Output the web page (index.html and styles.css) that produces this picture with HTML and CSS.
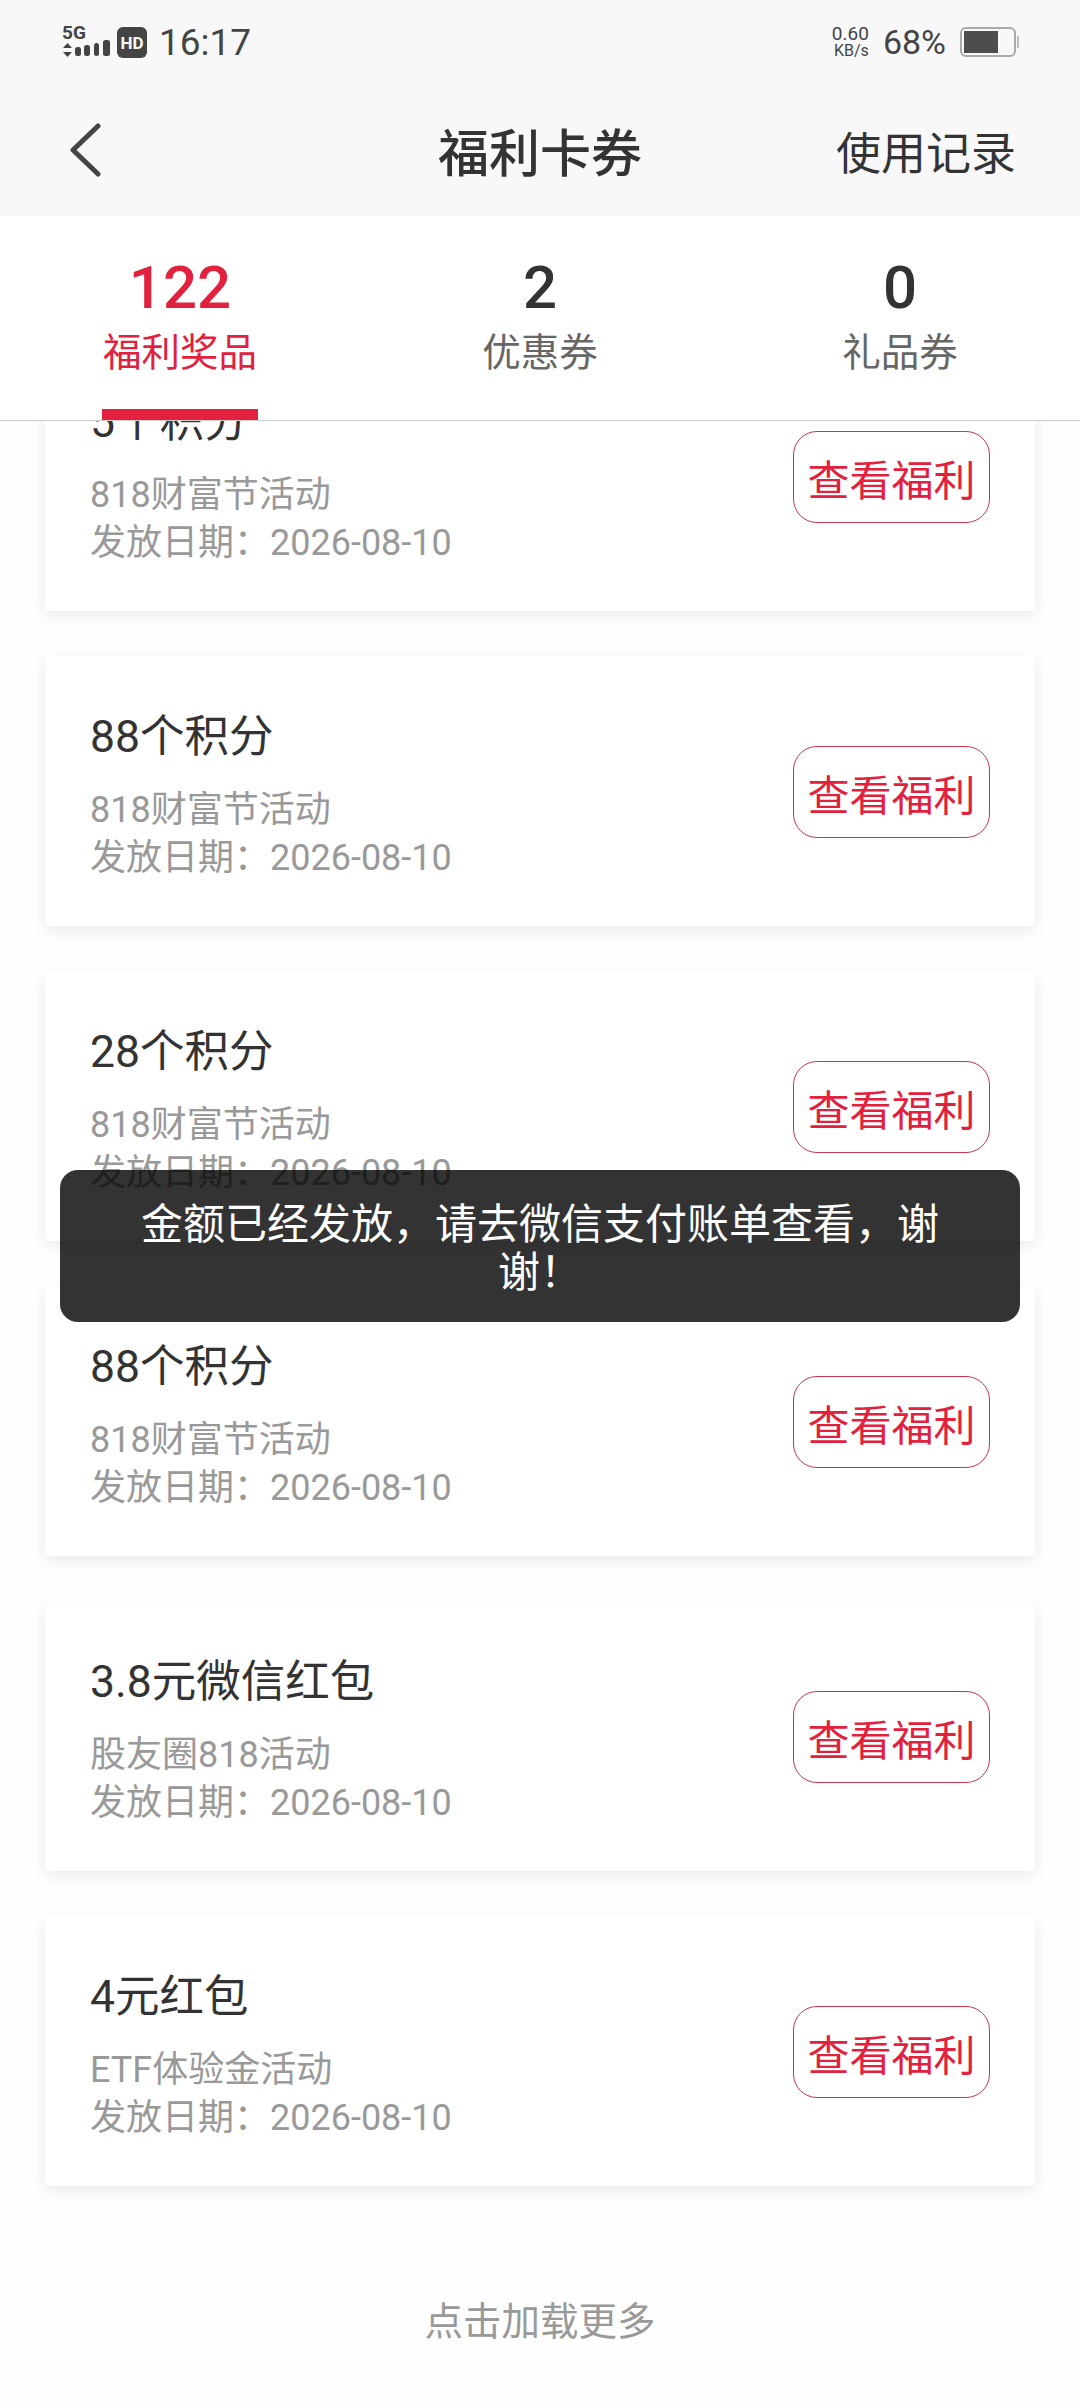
FILE: index.html
```html
<!DOCTYPE html>
<html lang="zh-CN">
  <head>
    <meta charset="UTF-8" />
    <meta name="viewport" content="width=device-width, initial-scale=1.0" />
    <title>福利卡券</title>
    <link rel="stylesheet" href="styles.css">
  </head>
  <body>
    <div class="statusbar">
      <div class="status-left">
        <svg class="signal" width="50" height="38" viewBox="0 -4 50 38">
          <text x="0" y="14" class="signal-text">5G</text>
          <path d="M5.500 18l4.500 5H1zM5.500 32l4.500-5H1z" fill="#444" />
          <rect x="13" y="22" width="6" height="9" rx="2.500" fill="#444" />
          <rect x="22" y="20" width="6" height="11" rx="2.500" fill="#444" />
          <rect x="32" y="18" width="5" height="13" rx="2.500" fill="#444" />
          <rect x="41" y="15" width="7" height="16" rx="2.500" fill="#444" />
        </svg>
        <svg class="hd" width="30" height="31" viewBox="0 0 30 31">
          <rect width="30" height="31" rx="6" fill="#444" />
          <text x="15" y="21.500" text-anchor="middle" class="hd-text">HD</text>
        </svg>
        <span class="time">16:17</span>
      </div>
      <div class="status-right">
        <div class="speed"><span>0.60</span><span class="speed-unit">KB/s</span></div>
        <span class="percent">68%</span>
        <svg class="battery" width="60" height="30" viewBox="0 0 60 30">
          <rect x="1" y="1" width="54" height="28" rx="5" fill="none" stroke="#aaa" stroke-width="2" />
          <rect x="4" y="4" width="34" height="22" fill="#4d4d4d" />
          <rect x="57" y="9" width="2" height="12" rx="1" fill="#bbb" />
        </svg>
      </div>
    </div>

    <div class="navbar">
      <svg class="back" width="34" height="54" viewBox="0 0 34 54">
        <path d="M30 3L5 27l25 24" fill="none" stroke="#444" stroke-width="5" stroke-linecap="round" stroke-linejoin="round" />
      </svg>
      <div class="nav-title">福利卡券</div>
      <div class="nav-link">使用记录</div>
    </div>

    <div class="tabs">
      <div class="tab active">
        <div class="tab-num">122</div>
        <div class="tab-label">福利奖品</div>
        <div class="tab-line"></div>
      </div>
      <div class="tab">
        <div class="tab-num">2</div>
        <div class="tab-label">优惠券</div>
      </div>
      <div class="tab">
        <div class="tab-num">0</div>
        <div class="tab-label">礼品券</div>
      </div>
    </div>

    <div class="list">
      <div class="card first">
        <div class="card-info">
          <div class="card-title">5个积分</div>
          <div class="card-sub">818财富节活动</div>
          <div class="card-sub">发放日期：2026-08-10</div>
        </div>
        <div class="card-btn">查看福利</div>
      </div>
      <div class="card">
        <div class="card-info">
          <div class="card-title">88个积分</div>
          <div class="card-sub">818财富节活动</div>
          <div class="card-sub">发放日期：2026-08-10</div>
        </div>
        <div class="card-btn">查看福利</div>
      </div>
      <div class="card">
        <div class="card-info">
          <div class="card-title">28个积分</div>
          <div class="card-sub">818财富节活动</div>
          <div class="card-sub">发放日期：2026-08-10</div>
        </div>
        <div class="card-btn">查看福利</div>
      </div>
      <div class="card">
        <div class="card-info">
          <div class="card-title">88个积分</div>
          <div class="card-sub">818财富节活动</div>
          <div class="card-sub">发放日期：2026-08-10</div>
        </div>
        <div class="card-btn">查看福利</div>
      </div>
      <div class="card">
        <div class="card-info">
          <div class="card-title">3.8元微信红包</div>
          <div class="card-sub">股友圈818活动</div>
          <div class="card-sub">发放日期：2026-08-10</div>
        </div>
        <div class="card-btn">查看福利</div>
      </div>
      <div class="card">
        <div class="card-info">
          <div class="card-title">4元红包</div>
          <div class="card-sub">ETF体验金活动</div>
          <div class="card-sub">发放日期：2026-08-10</div>
        </div>
        <div class="card-btn">查看福利</div>
      </div>
      <div class="load-more">点击加载更多</div>
    </div>

    <div class="toast">金额已经发放，请去微信支付账单查看，谢谢！</div>
  </body>
</html>
```

FILE: styles.css
```css
* {
  box-sizing: border-box;
}
body {
  margin: 0;
  width: 1080px;
  height: 2408px;
  overflow: hidden;
  position: relative;
  display: flex;
  flex-direction: column;
  font-family: Roboto, "Noto Sans CJK SC", sans-serif;
  background: #fefefe;
  color: #333;
}

.statusbar {
  height: 88px;
  flex-shrink: 0;
  padding: 0 60px 4px 62px;
  background: #f8f8f8;
  color: #444;
  display: flex;
  align-items: center;
  justify-content: space-between;
}
.status-left,
.status-right {
  display: flex;
  align-items: center;
}
.signal {
  margin-right: 5px;
  margin-bottom: 4px;
}
.signal-text {
  font: 700 19px Roboto, sans-serif;
  fill: #444;
}
.hd-text {
  font: 700 17px Roboto, sans-serif;
  fill: #f8f8f8;
}
.time {
  margin-left: 12px;
  font-size: 37px;
}
.speed {
  display: flex;
  flex-direction: column;
  align-items: flex-end;
  font-size: 19px;
  line-height: 17px;
}
.speed-unit {
  font-size: 16px;
}
.percent {
  margin: 0 14px;
  font-size: 34px;
}

.navbar {
  height: 128px;
  flex-shrink: 0;
  padding: 0 64px 4px 64px;
  background: #f8f8f8;
  display: grid;
  grid-template-columns: 1fr auto 1fr;
  align-items: center;
}
.back {
  display: block;
  margin-left: 4px;
}
.nav-title {
  font-size: 51px;
  font-weight: 500;
}
.nav-link {
  justify-self: end;
  font-size: 45px;
}

.tabs {
  height: 205px;
  flex-shrink: 0;
  background: #fff;
  border-bottom: 1px solid #ccc;
  display: grid;
  grid-template-columns: repeat(3, 1fr);
  position: relative;
  z-index: 2;
}
.tab {
  display: flex;
  flex-direction: column;
  align-items: center;
  padding-top: 37px;
}
.tab-num {
  font-size: 60px;
  font-weight: 500;
  line-height: 70px;
}
.tab-label {
  margin-top: 5px;
  font-size: 38.5px;
  line-height: 50px;
  color: #666;
}
.tab-line {
  width: 156px;
  height: 11px;
  margin-top: auto;
  background: #e1213d;
}
.tab.active .tab-num,
.tab.active .tab-label {
  color: #e1213d;
}

.list {
  flex: 1;
  overflow: hidden;
  padding: 0 45px;
  display: flex;
  flex-direction: column;
  gap: 45px;
}
.card {
  height: 270px;
  flex-shrink: 0;
  padding: 0 45px;
  background: #fff;
  border-radius: 4px;
  box-shadow: 0 5px 14px rgba(0, 0, 0, 0.08);
  display: flex;
  align-items: center;
  justify-content: space-between;
}
/* list is scrolled, first card sits partly under the tabs */
.card.first {
  margin-top: -80px;
}
.card-info {
  margin-top: 6px;
}
.card-title {
  font-size: 44.5px;
  line-height: 60px;
  margin-bottom: 19px;
  color: #333;
}
.card-sub {
  font-size: 36px;
  line-height: 48px;
  color: #999;
}
.card-btn {
  width: 197px;
  height: 92px;
  margin-top: 2px;
  border: 1px solid #c9354f;
  border-radius: 24px;
  color: #e1213d;
  font-size: 42px;
  display: flex;
  align-items: center;
  justify-content: center;
}
.load-more {
  flex-shrink: 0;
  margin-top: 61px;
  font-size: 38.5px;
  line-height: 60px;
  text-align: center;
  color: #999;
}

.toast {
  position: absolute;
  left: 60px;
  top: 1170px;
  width: 960px;
  height: 152px;
  padding: 31px 70px;
  border-radius: 18px;
  background: rgba(0, 0, 0, 0.8);
  color: #fff;
  font-size: 42px;
  line-height: 48px;
  text-align: center;
  z-index: 3;
}
```
